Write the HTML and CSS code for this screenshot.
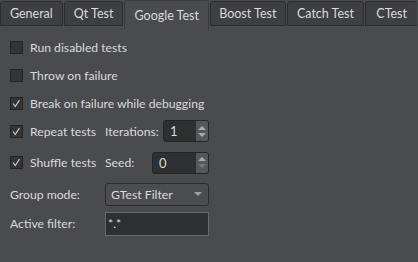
FILE: index.html
```html
<!DOCTYPE html>
<html lang="en">
<head>
    <meta charset="UTF-8">
    <title>Testing settings</title>
    <link rel="stylesheet" href="styles.css">
</head>
<body>
    <div class="tabs">
        <div class="tab tab-general">General</div>
        <div class="tab tab-qt">Qt Test</div>
        <div class="tab tab-google active">Google Test</div>
        <div class="tab tab-boost">Boost Test</div>
        <div class="tab tab-catch">Catch Test</div>
        <div class="tab tab-ctest">CTest</div>
    </div>

    <div class="panel">
        <div class="row">
            <span class="check"></span>
            <span class="label">Run disabled tests</span>
        </div>
        <div class="row">
            <span class="check"></span>
            <span class="label">Throw on failure</span>
        </div>
        <div class="row">
            <span class="check"><svg viewBox="0 0 13 13"><polyline points="2.5,6.5 5,10 10,2.5"/></svg></span>
            <span class="label">Break on failure while debugging</span>
        </div>
        <div class="row">
            <span class="check"><svg viewBox="0 0 13 13"><polyline points="2.5,6.5 5,10 10,2.5"/></svg></span>
            <span class="label opt">Repeat tests</span>
            <span class="label">Iterations:</span>
            <div class="spin spin-iter">
                <span class="spin-value">1</span>
                <span class="spin-btns"><span class="up"></span><span class="down"></span></span>
            </div>
        </div>
        <div class="row row-shuffle">
            <span class="check"><svg viewBox="0 0 13 13"><polyline points="2.5,6.5 5,10 10,2.5"/></svg></span>
            <span class="label opt">Shuffle tests</span>
            <span class="label">Seed:</span>
            <div class="spin spin-seed">
                <span class="spin-value">0</span>
                <span class="spin-btns disabled"><span class="up"></span><span class="down"></span></span>
            </div>
        </div>
        <div class="row row-group">
            <span class="label form-label">Group mode:</span>
            <div class="combo">
                <span>GTest Filter</span>
                <span class="arrow"></span>
            </div>
        </div>
        <div class="row row-filter">
            <span class="label form-label">Active filter:</span>
            <div class="edit">*.*</div>
        </div>
    </div>
</body>
</html>
```

FILE: styles.css
```css
:root {
    --bg: #4a4b4e;
    --tab-bg: #3e3f42;
    --border: #2b2c2e;
    --text: #dadada;
    --field-bg: #2e2f31;
}

body {
    margin: 0;
    width: 418px;
    height: 262px;
    overflow: hidden;
    background-color: var(--bg);
    color: var(--text);
    font-family: 'Lato', 'Liberation Sans', sans-serif;
    font-size: 12.2px;
}

.tabs {
    display: flex;
    height: 29px;
    align-items: flex-end;
}

.tab {
    box-sizing: border-box;
    height: 25px;
    margin-bottom: 3px;
    background-color: var(--tab-bg);
    border: 1px solid var(--border);
    border-radius: 3px 3px 0 0;
    display: flex;
    align-items: center;
    justify-content: center;
    margin-right: 1px;
    font-size: 12.5px;
}

.tab.active {
    height: 29px;
    margin-bottom: 0;
    background-color: var(--bg);
    border-color: #3a3b3d;
    border-bottom: none;
}

.tab-general { width: 63px; }
.tab-qt { width: 60px; }
.tab-google { width: 85px; }
.tab-boost { width: 76px; }
.tab-catch { width: 78px; }
.tab-ctest { width: 52px; border-right: none; }

.panel {
    padding: 4px 0 0 10px;
    display: flex;
    flex-direction: column;
}

.row {
    display: flex;
    align-items: center;
    height: 28px;
}

.row-shuffle {
    margin-top: 3px;
    height: 29px;
}

.row-group {
    height: 34px;
}

.row-filter {
    height: 25px;
}

.check {
    box-sizing: border-box;
    width: 13px;
    height: 13px;
    background-color: #333436;
    border: 1px solid #232425;
    margin-right: 7px;
    display: flex;
}

.check svg {
    width: 11px;
    height: 11px;
    fill: none;
    stroke: #cfcfcf;
    stroke-width: 1.3;
}

.label.opt {
    width: 75px;
}

.spin {
    box-sizing: border-box;
    height: 22px;
    display: flex;
    background-color: var(--field-bg);
    border: 1px solid #232425;
    border-radius: 3px;
    margin-left: auto;
    margin-right: 209px;
}

.spin-iter { width: 46px; }
.spin-seed { width: 57px; }

.spin-value {
    flex: 1;
    padding-left: 6px;
    line-height: 20px;
    font-size: 13px;
}

.spin-btns {
    width: 12px;
    background-color: #55575a;
    border-radius: 0 2px 2px 0;
    display: flex;
    flex-direction: column;
    align-items: center;
    justify-content: center;
    gap: 3px;
}

.up, .down {
    width: 0;
    height: 0;
    border-left: 4px solid transparent;
    border-right: 4px solid transparent;
}

.up { border-bottom: 4px solid #a8a9ab; }
.down { border-top: 4px solid #a8a9ab; }
.spin-btns.disabled .down { border-top-color: #75777a; }

.form-label {
    width: 95px;
}

.combo {
    box-sizing: border-box;
    width: 104px;
    height: 23px;
    border: 1px solid #2a2b2d;
    border-radius: 3px;
    background-color: #4c4d50;
    display: flex;
    align-items: center;
    justify-content: space-between;
    padding: 0 6px 0 5px;
}

.arrow {
    width: 0;
    height: 0;
    border-left: 4px solid transparent;
    border-right: 4px solid transparent;
    border-top: 4px solid #a0a1a3;
}

.edit {
    box-sizing: border-box;
    width: 104px;
    height: 24px;
    border: 1px solid #67686b;
    background-color: var(--field-bg);
    padding-left: 2px;
    line-height: 22px;
}
```
